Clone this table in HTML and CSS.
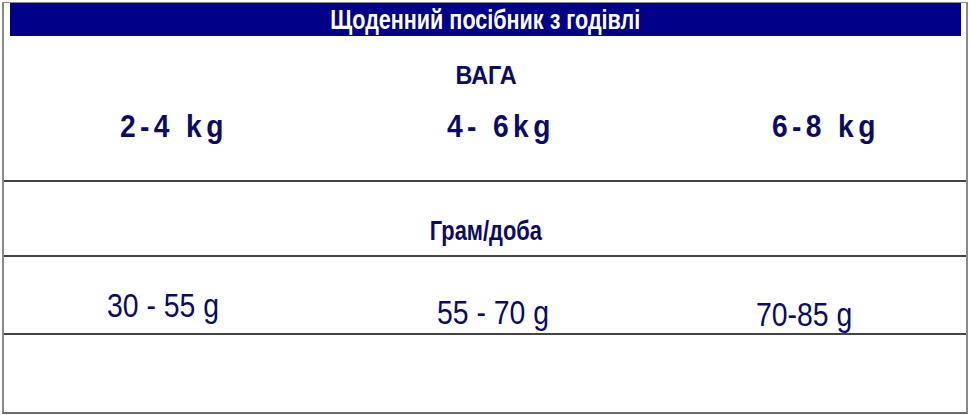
FILE: index.html
```html
<!DOCTYPE html>
<html lang="uk">
<head>
<meta charset="utf-8">
<title>Щоденний посібник з годівлі</title>
<link rel="stylesheet" href="styles.css">
</head>
<body>
<div class="frame">
  <div class="title"><span class="narrow title-text">Щоденний посібник з годівлі</span></div>
  <div class="weight-sec">
    <div class="weight-label"><span class="label-text">ВАГА</span></div>
    <div class="weights">
      <div class="w w1">2-4 kg</div>
      <div class="w w2">4- 6kg</div>
      <div class="w w3">6-8 kg</div>
    </div>
  </div>
  <div class="gram-sec"><span class="narrow gram-text">Грам/доба</span></div>
  <div class="values">
    <div class="v v1">30 - 55 g</div>
    <div class="v v2">55 - 70 g</div>
    <div class="v v3">70-85 g</div>
  </div>
  <div class="empty"></div>
</div>
</body>
</html>
```

FILE: styles.css
```css
html, body {
  margin: 0;
  padding: 0;
  background: #fff;
}
.frame {
  margin: 2px 0 0 2px;
  width: 962px;
  height: 409px;
  border-top: 1px solid #8a8a8a;
  border-left: 2px solid #8a8a8a;
  border-right: 2px solid #8a8a8a;
  border-bottom: 2px solid #6a6a6a;
  display: flex;
  flex-direction: column;
  font-family: "Liberation Sans", Arial, sans-serif;
  color: #0b0b66;
}
.narrow {
  display: inline-block;
  transform: scaleX(0.78);
  transform-origin: center;
  white-space: nowrap;
}
.title {
  margin: 0 5px 0 6px;
  height: 33px;
  background: #000088;
  color: #fff;
  font-weight: bold;
  font-size: 28px;
  line-height: 33px;
  text-align: center;
  overflow: hidden;
}
.title-text {
  transform: scaleX(0.77);
}
.weight-sec {
  height: 144px;
  border-bottom: 2px solid #444;
  display: flex;
  flex-direction: column;
}
.weight-label {
  margin-top: 24px;
  text-align: center;
  font-weight: bold;
  font-size: 26px;
  line-height: 30px;
  padding-left: 2px;
}
.label-text {
  display: inline-block;
  transform: scaleX(0.9);
}
.weights {
  margin-top: 19px;
  display: flex;
  font-weight: bold;
  font-size: 32px;
  line-height: 34px;
  letter-spacing: 5px;
}
.w {
  white-space: pre;
  transform: scaleX(0.88);
  transform-origin: left center;
}
.w1 { margin-left: 116px; }
.w2 { margin-left: 205px; }
.w3 { margin-left: 202px; }
.gram-sec {
  height: 75px;
  border-bottom: 2px solid #444;
  text-align: center;
  font-weight: bold;
  font-size: 28px;
  line-height: 32px;
  padding-top: 33px;
  box-sizing: border-box;
  padding-left: 2px;
}
.values {
  height: 76px;
  border-bottom: 2px solid #444;
  display: flex;
  font-size: 33px;
  line-height: 36px;
}
.v {
  white-space: pre;
  transform: scaleX(0.86);
  transform-origin: left center;
}
.v1 { margin-left: 103px; margin-top: 31px; }
.v2 { margin-left: 200px; margin-top: 38px; }
.v3 { margin-left: 188px; margin-top: 40px; }
.empty { flex: 1; }
```
